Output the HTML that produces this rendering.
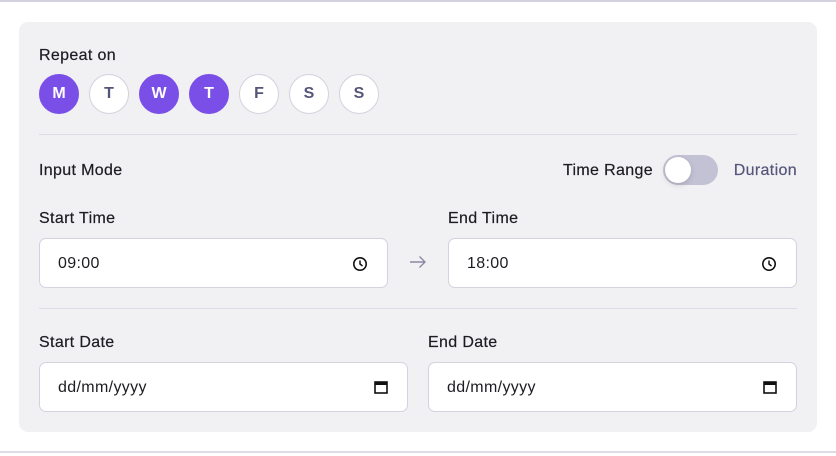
<!DOCTYPE html>
<html><head><meta charset="utf-8"><style>
*{box-sizing:border-box;margin:0;padding:0}
body{width:836px;height:456px;background:#fff;font-family:"Liberation Sans",Arial,sans-serif;color:#1c1c22;position:relative;overflow:hidden}
.topline{position:absolute;left:0;top:0;width:836px;height:2px;background:#d3d2de}
.botline{position:absolute;left:0;top:451px;width:836px;height:2px;background:#dddce6}
.card{position:absolute;left:19px;top:22px;width:798px;height:410px;background:#f1f1f4;border-radius:9px}
.abs{position:absolute}
.lbl{font-size:16px;color:#1c1c22;letter-spacing:.35px;-webkit-text-stroke:.2px #1c1c22}
.day{position:absolute;top:74px;width:40px;height:40px;border-radius:50%;border:1px solid #d3d2de;background:#fff;color:#55557a;font-weight:bold;font-size:16px;display:flex;align-items:center;justify-content:center}
.day.on{background:#7a4fe8;border-color:#7a4fe8;color:#fff}
.hr{position:absolute;left:39px;width:758px;height:1px;background:#dddce6}
.inp{position:absolute;height:50px;background:#fff;border:1px solid #d3d2de;border-radius:7px;font-size:16px;letter-spacing:.35px;padding-left:18px;padding-top:2px;display:flex;align-items:center;color:#1c1c22}
.inp svg{position:absolute;right:19px;top:17px}
</style></head><body>
<div class="topline"></div>
<div class="card"></div>
<div class="abs lbl" style="left:39px;top:47px">Repeat on</div>
<div class="day on" style="left:39px">M</div>
<div class="day" style="left:89px">T</div>
<div class="day on" style="left:139px">W</div>
<div class="day on" style="left:189px">T</div>
<div class="day" style="left:239px">F</div>
<div class="day" style="left:289px">S</div>
<div class="day" style="left:339px">S</div>
<div class="hr" style="top:134px"></div>
<div class="abs lbl" style="left:39px;top:162px">Input Mode</div>
<div class="abs lbl" style="right:183px;top:162px">Time Range</div>
<div class="abs" style="left:663px;top:155px;width:55px;height:30px;border-radius:15px;background:#c3c2d4"></div>
<div class="abs" style="left:665px;top:157px;width:26px;height:26px;border-radius:50%;background:#fff;box-shadow:0 2px 6px rgba(0,0,0,.15)"></div>
<div class="abs lbl" style="right:39px;top:162px;color:#55557a;-webkit-text-stroke:.2px #55557a">Duration</div>
<div class="abs lbl" style="left:39px;top:210px">Start Time</div>
<div class="abs lbl" style="left:448px;top:210px">End Time</div>
<div class="inp" style="left:39px;top:238px;width:349px">09:00<svg width="16" height="16" viewBox="0 0 16 16"><circle cx="8" cy="8" r="6.2" fill="none" stroke="#111" stroke-width="1.6"/><path d="M8 4.5V8l2.5 2" fill="none" stroke="#111" stroke-width="1.5"/></svg></div>
<svg class="abs" style="left:409px;top:255px" width="18" height="14" viewBox="0 0 18 14"><path d="M1 7h15M10.5 1.5 16 7l-5.5 5.5" fill="none" stroke="#8a89a6" stroke-width="1.4"/></svg>
<div class="inp" style="left:448px;top:238px;width:349px">18:00<svg width="16" height="16" viewBox="0 0 16 16"><circle cx="8" cy="8" r="6.2" fill="none" stroke="#111" stroke-width="1.6"/><path d="M8 4.5V8l2.5 2" fill="none" stroke="#111" stroke-width="1.5"/></svg></div>
<div class="hr" style="top:308px"></div>
<div class="abs lbl" style="left:39px;top:334px">Start Date</div>
<div class="abs lbl" style="left:428px;top:334px">End Date</div>
<div class="inp" style="left:39px;top:362px;width:369px">dd/mm/yyyy<svg width="14" height="16" viewBox="0 0 14 16" style="right:19px;top:16px"><rect x="1" y="3" width="12" height="11" fill="none" stroke="#111" stroke-width="1.6"/><rect x="1" y="3" width="12" height="3" fill="#111"/></svg></div>
<div class="inp" style="left:428px;top:362px;width:369px">dd/mm/yyyy<svg width="14" height="16" viewBox="0 0 14 16" style="right:19px;top:16px"><rect x="1" y="3" width="12" height="11" fill="none" stroke="#111" stroke-width="1.6"/><rect x="1" y="3" width="12" height="3" fill="#111"/></svg></div>
<div class="botline"></div>
</body></html>
